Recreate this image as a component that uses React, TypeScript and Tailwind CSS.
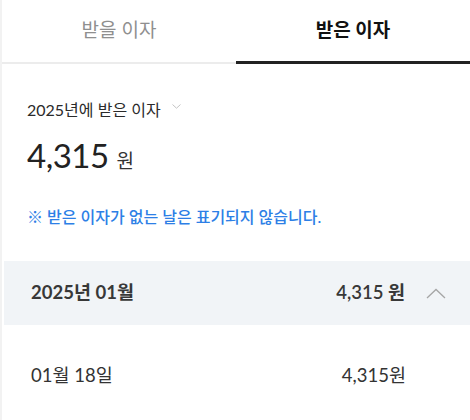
import React from "react";

const font = { fontFamily: 'Lato, "Noto Sans CJK KR", sans-serif' };

export default function App() {
  return (
    <div
      className="w-[470px] h-[420px] bg-white border-l-2 border-[#f2f2f2] overflow-hidden"
      style={font}
    >
      <div className="flex h-[64px]">
        <div className="flex-1 flex items-center justify-center border-b-2 border-[#ececec] text-[19px] text-[#8f8f8f] pb-[2px]">
          받을 이자
        </div>
        <div className="flex-1 flex items-center justify-center border-b-[3px] border-[#222] text-[19px] font-bold text-[#111] pb-[1px]">
          받은 이자
        </div>
      </div>

      <div className="pl-[25px]">
        <div className="mt-[35px] flex items-center h-[22px] text-[16px] text-[#2a2a2a]">
          <span>2025년에 받은 이자</span>
          <svg className="ml-[11px] mb-[8px]" width="9" height="5" viewBox="0 0 9 5">
            <path d="M0.5 0.5 L4.5 4.2 L8.5 0.5" fill="none" stroke="#c4c4c4" strokeWidth="1" />
          </svg>
        </div>
        <div className="mt-[14px] flex items-baseline h-[40px] leading-[40px]">
          <span className="text-[33px] text-[#222] tracking-[-0.5px]">4,315</span>
          <span className="ml-[8px] text-[19px] text-[#333]">원</span>
        </div>
        <div className="mt-[32px] h-[20px] leading-[20px] text-[16px] font-medium text-[#2d7fe6]">
          ※ 받은 이자가 없는 날은 표기되지 않습니다.
        </div>
      </div>

      <div className="mt-[34px] ml-[2px] h-[64px] bg-[#f1f4f7] flex items-center pl-[27px] pr-[24px]">
        <span className="text-[18.5px] font-bold text-[#383838]">2025년 01월</span>
        <span className="ml-auto text-[18.5px] font-semibold text-[#383838]">4,315 원</span>
        <svg className="ml-[21px]" width="20" height="11" viewBox="0 0 20 11">
          <path d="M1 10 L10 1.5 L19 10" fill="none" stroke="#a6a6a6" strokeWidth="1.3" />
        </svg>
      </div>

      <div className="ml-[2px] h-[102px] flex items-center pl-[27px] pr-[64px]">
        <span className="text-[18.5px] text-[#333]">01월 18일</span>
        <span className="ml-auto text-[18.5px] text-[#333]">4,315원</span>
      </div>
    </div>
  );
}
